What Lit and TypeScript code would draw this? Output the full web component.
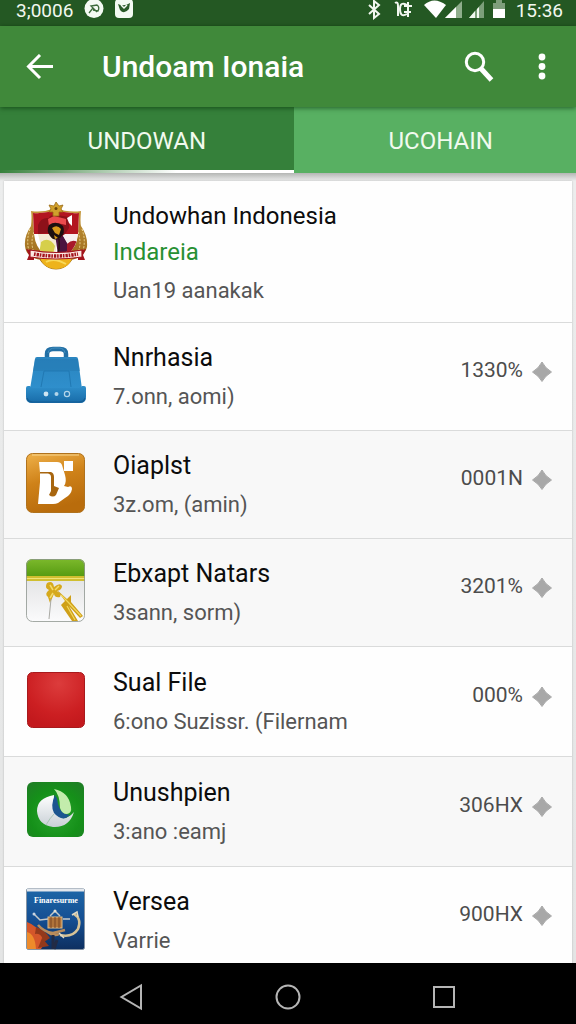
import { LitElement, html, svg, css, TemplateResult } from "lit";
import { customElement, property, state } from "lit/decorators.js";

type Item = {
  icon: string;
  title: string;
  accent?: string;
  sub: string;
  value?: string;
  shaded?: boolean;
  roomy?: boolean;
};

const ITEMS: Item[] = [
  { icon: "emblem", title: "Undowhan Indonesia", accent: "Indareia", sub: "Uan19 aanakak" },
  { icon: "bag", title: "Nnrhasia", sub: "7.onn, aomi)", value: "1330%" },
  { icon: "letter", title: "Oiaplst", sub: "3z.om, (amin)", value: "0001N", shaded: true },
  { icon: "ribbon", title: "Ebxapt Natars", sub: "3sann, sorm)", value: "3201%", shaded: true },
  { icon: "red", title: "Sual File", sub: "6:ono Suzissr. (Filernam", value: "000%", roomy: true },
  { icon: "swirl", title: "Unushpien", sub: "3:ano :eamj", value: "306HX", shaded: true, roomy: true },
  { icon: "poster", title: "Versea", sub: "Varrie", value: "900HX" },
];

const ICONS: Record<string, TemplateResult> = {
  emblem: html`<svg width="64" height="68" viewBox="0 0 64 68" aria-hidden="true">
    <defs>
      <linearGradient id="gold" x1="0" y1="0" x2="0" y2="1">
        <stop offset="0" stop-color="#c79a3c" /><stop offset="1" stop-color="#9c6a1c" />
      </linearGradient>
      <clipPath id="shield"><path d="M9 11Q20 12 32 8Q44 12 55 11L54 32Q52 52 32 60Q12 52 10 32Z" /></clipPath>
    </defs>
    <circle cx="32" cy="49" r="18" fill="#e0a51c" stroke="#a8741a" />
    <path d="M7 9Q19 11 31 6Q45 11 57 9Q56 20 57 24Q64 34 63 45Q60 56 46 58L18 58Q2 56 1 44Q0 34 7 24Q8 16 7 9Z" fill="url(#gold)" />
    <g fill="none" stroke="#efd692" stroke-width="1">
      <path d="M6 27Q2 38 5 49M10 30Q6 40 10 51M58 27Q62 38 59 49M54 30Q58 40 54 51" stroke-dasharray="2 1.5" />
    </g>
    <g clip-path="url(#shield)">
      <path d="M8 6H56V62H8Z" fill="#fff" />
      <path d="M8 6H56V32H32V10L32 32H8Z" fill="#b31520" />
      <path d="M14 32H32V56H20Z" fill="#f4ead3" />
      <path d="M31 32H38L47 48L34 53Z" fill="#4c1440" />
      <path d="M38 32H55V45L46 45Z" fill="#f7f1f0" />
      <path d="M43 42Q49 36 55 41V50H43Z" fill="#a81a2a" />
      <path d="M17 40Q25 34 31 44L29 52H15Z" fill="#d6cf4b" />
    </g>
    <path d="M14 23Q17 15 25 16Q27 12 33 13L45 15V26L41 32L34 37L24 31L14 32Z" fill="#8d1119" />
    <path d="M24 17L30 14L42 17V23L33 21L25 24Z" fill="#ec4b4d" />
    <path d="M43 16L48 13V24L45 21Z" fill="#fff" />
    <path d="M25 23Q32 18 39 24Q42 31 36 36Q30 40 26 34Q22 29 25 23Z" fill="#1c1010" />
    <path d="M28 26Q33 22 37 27L35 33L31 31ZM30 33L34 36L31 37Z" fill="#d8991a" />
    <path d="M35 37Q36 48 33 53" stroke="#2a1410" stroke-width="1.5" fill="none" />
    <path d="M32 0L35 4L39 3L37 7L39 10L35 10V14H29V10L25 10L27 7L25 3L30 4Z" fill="#d0a02c" stroke="#9a6b14" stroke-width=".8" />
    <circle cx="32" cy="6.500" r="1.500" fill="#6c470b" />
    <path d="M16 54Q32 50 48 54Q47 66 32 67Q18 66 16 54Z" fill="#eeb31c" />
    <path d="M22 60Q30 55 42 62" fill="none" stroke="#f8d95a" stroke-width="2" />
    <path d="M2 47L10 49V58L3 58L5 53ZM62 47L54 49V58L61 58L59 53Z" fill="#a3141d" />
    <path d="M6 48Q32 53 58 48V55Q32 59 6 55Z" fill="#fbe9e3" stroke="#a3141d" stroke-width="1.200" />
    <path d="M10 52Q32 56 54 52" fill="none" stroke="#a3141d" stroke-width="3.500" stroke-dasharray="1.600 1 2.400 .8" />
  </svg>`,
  bag: html`<svg width="60" height="60" viewBox="0 0 60 60" aria-hidden="true">
    <defs>
      <linearGradient id="bagBody" x1="0" y1="0" x2="0" y2="1">
        <stop offset="0" stop-color="#2a85c0" /><stop offset="1" stop-color="#2f8fcc" />
      </linearGradient>
      <linearGradient id="bagBase" x1="0" y1="0" x2="0" y2="1">
        <stop offset="0" stop-color="#2f8fcb" /><stop offset="1" stop-color="#176ba8" />
      </linearGradient>
    </defs>
    <path d="M21 14V9Q21 4 27 4H34Q40 4 40 9V14" fill="none" stroke="#226fa5" stroke-width="4.500" />
    <path d="M22 8Q23 3 29 3H33Q38 3 39 8" fill="none" stroke="#438fbe" stroke-width="1" />
    <path d="M9 14Q9 12 11 12H50Q52 12 52 14L56 44H4Z" fill="url(#bagBody)" />
    <path d="M9 14L7 26H54L52 14Z" fill="#2479b3" opacity=".6" />
    <path d="M18 26L15 42M43 26L45 42M18 26H43" stroke="#2179b3" stroke-width="1" fill="none" />
    <path d="M0 43Q0 41 2 41H4Q5 43 8 43H52Q55 43 56 41H58Q60 41 60 43V52Q60 58 54 58H6Q0 58 0 52Z" fill="url(#bagBase)" />
    <path d="M1 53Q2 57 7 57H53Q58 57 59 53" fill="none" stroke="#145d95" stroke-width="1.200" />
    <circle cx="20" cy="49" r="2.400" fill="#cfe5f2" />
    <circle cx="30.500" cy="49" r="2" fill="#b3d5ea" />
    <circle cx="41" cy="49" r="2.600" fill="#2578b4" stroke="#b3d5ea" stroke-width="1.200" />
  </svg>`,
  letter: html`<svg width="60" height="60" viewBox="0 0 60 60" aria-hidden="true">
    <defs>
      <linearGradient id="amber" x1="0" y1="0" x2=".3" y2="1">
        <stop offset="0" stop-color="#efb14a" /><stop offset=".5" stop-color="#cf8219" /><stop offset="1" stop-color="#b96c0c" />
      </linearGradient>
    </defs>
    <rect x=".5" y=".5" width="58" height="59" rx="6" fill="url(#amber)" stroke="#b0721d" />
    <path d="M6 2H53" stroke="#f7d58f" stroke-width="1" />
    <path d="M13 9H31Q35 9 36 12L39 22Q41 29 38 33L42 34Q46 32 46 36Q45 42 39 45L32 50Q30 51 27 51H12L14 29V20Z" fill="#fff" />
    <path d="M14 19H25Q28 20 28 24V33L33 35L30 42Q27 45 23 42L25 38V24Q25 21 22 20.500H14Z" fill="#a8660f" />
    <rect x="38" y="8" width="9" height="10" fill="#fff" />
  </svg>`,
  ribbon: html`<svg width="60" height="63" viewBox="0 0 60 63" aria-hidden="true">
    <defs>
      <linearGradient id="lime" x1="0" y1="0" x2="0" y2="1">
        <stop offset="0" stop-color="#7cb92c" /><stop offset="1" stop-color="#559a10" />
      </linearGradient>
      <linearGradient id="paper" x1="0" y1="0" x2="0" y2="1">
        <stop offset="0" stop-color="#d9dadb" /><stop offset="1" stop-color="#fbfbfc" />
      </linearGradient>
      <clipPath id="sheet"><rect x="0" y="0" width="59" height="62" rx="6" /></clipPath>
    </defs>
    <g clip-path="url(#sheet)">
      <rect width="60" height="63" fill="url(#paper)" />
      <rect width="60" height="18" fill="url(#lime)" />
      <rect y="17" width="60" height="5" fill="#d0bf30" />
      <path d="M0 19.500H60" stroke="#f0e376" />
      <path d="M21 24Q27 21 28 28Q34 23 36 27Q36 31 31 32Q36 35 34 38Q29 39 28 35L24 44L22 38Q18 35 23 31Q18 29 21 24Z" fill="#d6a91c" />
      <path d="M24 26L27 31M33 27L29 31M24 39L27 34" stroke="#f4dc6a" stroke-width="1.500" />
      <path d="M31 31L41 40L45 36L45 43L57 57L54 59L43 47L52 62H46L35 46L39 42Z" fill="#cfa019" />
      <path d="M35 36L42 43L55 57M41 47L49 61" stroke="#f2d85e" stroke-width="1.200" fill="none" />
      <path d="M25 40L23 60" stroke="#a9a9a4" stroke-width="1" />
    </g>
    <rect x=".5" y=".5" width="58" height="62" rx="6" fill="none" stroke="#8f9690" opacity=".8" />
  </svg>`,
  red: html`<svg width="60" height="58" viewBox="0 0 60 58" aria-hidden="true">
    <defs>
      <radialGradient id="cherry" cx=".55" cy=".2" r=".8">
        <stop offset="0" stop-color="#dc3c3c" /><stop offset=".7" stop-color="#cc1f22" /><stop offset="1" stop-color="#c3191d" />
      </radialGradient>
    </defs>
    <rect x="1.500" y="1.500" width="57" height="55" rx="5" fill="url(#cherry)" stroke="#a81a1d" />
  </svg>`,
  swirl: html`<svg width="60" height="56" viewBox="0 0 60 56" aria-hidden="true">
    <defs>
      <radialGradient id="leaf" cx=".5" cy=".6" r=".75">
        <stop offset="0" stop-color="#2aa52e" /><stop offset=".6" stop-color="#159019" /><stop offset="1" stop-color="#1f7d26" />
      </radialGradient>
      <linearGradient id="pearl" x1="0" y1="0" x2="0" y2="1">
        <stop offset="0" stop-color="#fff" /><stop offset="1" stop-color="#c9d0d6" />
      </linearGradient>
    </defs>
    <rect x="1" y="0" width="57" height="55" rx="6" fill="url(#leaf)" />
    <path d="M28 13Q11 16 11 29Q12 43 27 45Q43 46 48 30Q42 37 36 36Q31 34 29 26Q27 20 28 13Z" fill="url(#pearl)" />
    <path d="M29 13Q32 17 32 22Q35 33 44 33L40 36Q34 38 28 31Q24 24 29 13Z" fill="#1c5590" />
    <path d="M28 7Q43 10 45 25Q46 31 41 32Q36 32 34 26Q34 13 28 7Z" fill="#c3ecac" />
    <path d="M28 32Q24 36 20 43" fill="none" stroke="#a9c6b5" stroke-width="1" />
  </svg>`,
  poster: html`<svg width="60" height="62" viewBox="0 0 60 62" aria-hidden="true">
    <defs>
      <linearGradient id="sea" x1="0" y1="0" x2="0" y2="1">
        <stop offset="0" stop-color="#1d67a8" /><stop offset=".5" stop-color="#154f93" /><stop offset="1" stop-color="#0d2f60" />
      </linearGradient>
    </defs>
    <rect x=".5" y=".5" width="58" height="61" rx="2" fill="url(#sea)" stroke="#8593a3" />
    <path d="M1 2H58" stroke="#e3e7ec" stroke-width="3" />
    <text x="8" y="15" font-family="'Liberation Serif', serif" font-size="8" font-weight="700" fill="#fff">Finaresurme</text>
    <path d="M1 34Q12 38 16 48Q20 55 15 61H1Z" fill="#d4562a" />
    <path d="M1 44Q9 46 10 61H1Z" fill="#ee8b2b" />
    <path d="M10 39Q19 42 24 50L18 54Q15 44 9 46ZM16 50L23 58L12 60Z" fill="#93391b" />
    <rect x="22" y="29" width="14" height="11" fill="#b0733a" stroke="#e3c08a" />
    <path d="M25 29V40M29 29V40M33 29V40" stroke="#7a4722" />
    <path d="M24 28L29 23L34 28M8 26L14 32L22 31M37 31H44" fill="none" stroke="#c3c8c9" stroke-width="1.500" />
    <circle cx="29" cy="23" r="1.500" fill="#e6e2d4" /><circle cx="8" cy="26" r="1.500" fill="#c9d4e2" />
    <path d="M12 37Q18 44 27 45L39 42M20 43Q28 49 33 46" fill="none" stroke="#b98c5c" stroke-width="2.500" />
    <path d="M48 26Q56 31 52 41Q46 50 34 47" fill="none" stroke="#d6c296" stroke-width="2.500" />
    <path d="M46 27L51 24L52 29M33 45L38 50" fill="none" stroke="#e3dac3" stroke-width="1.500" />
    <path d="M27 47V61M31 52L28 61" stroke="#222b45" stroke-width="3" />
  </svg>`,
};

@customElement("file-row")
class FileRow extends LitElement {
  @property({ attribute: false }) item!: Item;

  static styles = css`
    :host {
      display: block;
    }
    .row {
      display: flex;
      align-items: center;
      gap: 25px;
      box-sizing: border-box;
      min-height: 108px;
      padding: 12px 20px;
      border-bottom: 1px solid #dadbdb;
      background: #fefefe;
    }
    .shaded {
      background: #f8f8f8;
    }
    .roomy {
      min-height: 110px;
    }
    .lead {
      align-items: flex-start;
      min-height: 142px;
      padding-top: 19px;
    }
    .icon {
      flex: 0 0 64px;
      display: flex;
      justify-content: center;
      padding-bottom: 4px;
    }
    .lead .icon {
      padding-top: 2px;
    }
    .icon svg {
      display: block;
    }
    .body {
      flex: 1;
      min-width: 0;
      padding-top: 2px;
    }
    .title,
    .accent,
    .sub {
      margin: 0;
      line-height: 28px;
      white-space: nowrap;
      font-weight: 400;
    }
    .title {
      font-size: 25px;
      color: #0c0c0c;
    }
    .lead .title {
      font-size: 24px;
    }
    .accent {
      margin-top: 8px;
      font-size: 24px;
      color: #279032;
    }
    .sub {
      margin-top: 11px;
      font-size: 22px;
      color: #555;
    }
    .side {
      display: flex;
      align-items: center;
      gap: 9px;
      padding-bottom: 14px;
      font-size: 21px;
      line-height: 28px;
      color: #4c4c4c;
      white-space: nowrap;
    }
    .side svg {
      display: block;
      padding-top: 5px;
    }
  `;

  render() {
    const { icon, title, accent, sub, value, shaded, roomy } = this.item;
    return html`
      <article class="row ${shaded ? "shaded" : ""} ${roomy ? "roomy" : ""} ${accent ? "lead" : ""}">
        <div class="icon">${ICONS[icon]}</div>
        <div class="body">
          <h2 class="title">${title}</h2>
          ${accent ? html`<p class="accent">${accent}</p>` : ""}
          <p class="sub">${sub}</p>
        </div>
        ${value
          ? html`<div class="side">
              <span>${value}</span>
              <svg width="20" height="20" viewBox="0 0 20 20" aria-hidden="true">
                <path d="M10 0Q13 6 19.500 10Q13 14 10 19.500Q7 14 .5 10Q7 6 10 0Z" fill="#a8a8a8" stroke="#a8a8a8" />
              </svg>
            </div>`
          : ""}
      </article>
    `;
  }
}

@customElement("app-root")
class AppRoot extends LitElement {
  @state() private tab = 0;

  static styles = css`
    :host {
      display: flex;
      flex-direction: column;
      height: 100vh;
      overflow: hidden;
      background: #e9eaea;
      font-family: Roboto, "Liberation Sans", sans-serif;
    }
    button {
      margin: 0;
      padding: 0;
      border: 0;
      background: none;
      color: inherit;
      font: inherit;
      cursor: pointer;
    }
    svg {
      display: block;
    }
    .status {
      display: flex;
      justify-content: space-between;
      align-items: flex-start;
      height: 26px;
      flex: none;
      padding: 0 13px 0 16px;
      background: #245823;
      color: #f2f8f0;
      font-size: 19px;
      line-height: 22px;
    }
    .group {
      display: flex;
      align-items: flex-start;
      gap: 11px;
    }
    .bar {
      display: flex;
      align-items: center;
      height: 81px;
      flex: none;
      padding: 0 10px 0 16px;
      background: #40893a;
      color: #fff;
      box-shadow: 0 1px 5px rgba(0, 40, 0, 0.6);
      z-index: 1;
    }
    .tool {
      display: grid;
      place-items: center;
      width: 48px;
      height: 48px;
    }
    .heading {
      flex: 1;
      margin: 0 0 0 38px;
      font-size: 30px;
      line-height: 40px;
      font-weight: 500;
      white-space: nowrap;
    }
    .more {
      margin-left: 15px;
    }
    .tabs {
      display: flex;
      overflow: hidden;
      height: 66px;
      flex: none;
      color: #f1faee;
      background: #58b062;
    }
    .tab {
      flex: 0 0 51%;
      padding-top: 4px;
      border-bottom: 3px solid transparent;
      font-size: 24px;
      line-height: 58px;
    }
    .active {
      background: #35803a;
      border-image: linear-gradient(90deg, #35803a, #fff 60%) 1;
    }
    .content {
      flex: 1;
      min-height: 0;
      overflow-y: auto;
      scrollbar-width: none;
      padding: 8px 4px 0;
      background: linear-gradient(#b4b6b4, #eceded 8px, #e4e5e5);
    }
    .list {
      list-style: none;
      margin: 0;
      padding: 0;
      box-shadow: 0 0 2px rgba(0, 0, 0, 0.2);
    }
    .nav {
      display: grid;
      grid-template-columns: repeat(3, 27%);
      justify-content: center;
      justify-items: center;
      align-items: center;
      height: 55px;
      padding-top: 6px;
      background: #000;
      flex: none;
    }
  `;

  private tabButton(label: string, index: number) {
    return html`<button
      class="tab ${this.tab === index ? "active" : ""}"
      role="tab"
      aria-selected=${this.tab === index ? "true" : "false"}
      @click=${() => (this.tab = index)}
    >${label}</button>`;
  }

  private statusIcons() {
    return svg`
      <g fill="none" stroke="#f2f8f0" stroke-width="2">
        <path d="M2 5L12 14L7 18V1L12 5L2 14" />
        <path d="M28 3Q31 1 31 6V16M40 5Q33 1 33 9Q33 18 40 14M41 2V17M37 6H45M37 12H44" />
      </g>
      <path d="M57 5Q67 -4 79 5L69 18Z" fill="#fff" />
      <path d="M78 18L95 1V18Z" fill="#8fae8c" /><path d="M78 18L89 7V18Z" fill="#fff" />
      <path d="M102 18L117 1V18Z" fill="#7c9f7a" /><path d="M102 18L108 11V18ZM110 9L112 7V18H110Z" fill="#f2f8f0" />
      <path d="M126 3H129V0H135V3H138V9H126Z" fill="#7e9f7c" /><path d="M126 9H138V18H126Z" fill="#fff" />
    `;
  }

  render() {
    return html`
      <div class="status">
        <div class="group">
          <span>3;0006</span>
          <svg width="20" height="20" viewBox="0 0 20 20" aria-hidden="true">
            <circle cx="10" cy="8.500" r="9.500" fill="#f4faf3" />
            <path d="M5 13L9 8L7 6L13 5Q16 7 14 11L9 10M9 8L13 12" fill="none" stroke="#3c6a3a" stroke-width="1.300" />
          </svg>
          <svg width="18" height="20" viewBox="0 0 18 20" aria-hidden="true">
            <rect x="0" y="-1" width="18" height="19" rx="4" fill="#f4faf3" />
            <path d="M3 4Q9 7 15 3L14 9Q9 15 5 10Z" fill="#2a5a29" />
            <path d="M6 5L9 8L12 5" fill="none" stroke="#f4faf3" stroke-width="1.500" />
          </svg>
        </div>
        <div class="group">
          <svg width="138" height="20" viewBox="0 0 138 20" aria-hidden="true">${this.statusIcons()}</svg>
          <span>15:36</span>
        </div>
      </div>
      <header class="bar">
        <button class="tool" aria-label="Back">
          <svg width="28" height="26" viewBox="0 0 28 26">
            <path d="M27 12.500H3M14 1L2.500 12.500L14 24" fill="none" stroke="#fff" stroke-width="3" />
          </svg>
        </button>
        <h1 class="heading">Undoam Ionaia</h1>
        <button class="tool" aria-label="Search">
          <svg width="30" height="32" viewBox="0 0 30 32">
            <circle cx="11" cy="11" r="8.700" fill="none" stroke="#fff" stroke-width="3" />
            <path d="M16.500 17L27.500 29" stroke="#fff" stroke-width="5" />
          </svg>
        </button>
        <button class="tool more" aria-label="More options">
          <svg width="8" height="28" viewBox="0 0 8 28" fill="#fff">
            <circle cx="4" cy="4" r="3.400" /><circle cx="4" cy="13.500" r="3.400" /><circle cx="4" cy="23" r="3.400" />
          </svg>
        </button>
      </header>
      <div class="tabs" role="tablist">${this.tabButton("UNDOWAN", 0)}${this.tabButton("UCOHAIN", 1)}</div>
      <main class="content">
        <ul class="list">
          ${ITEMS.map((item) => html`<li><file-row .item=${item}></file-row></li>`)}
        </ul>
      </main>
      <nav class="nav">
        <button aria-label="Back">
          <svg width="26" height="28" viewBox="0 0 26 28"><path d="M22 2.500V25.500L2.500 14Z" fill="none" stroke="#b5b5b5" stroke-width="2" /></svg>
        </button>
        <button aria-label="Home">
          <svg width="28" height="28" viewBox="0 0 28 28"><circle cx="14" cy="14" r="11.500" fill="none" stroke="#b5b5b5" stroke-width="2" /></svg>
        </button>
        <button aria-label="Recent apps">
          <svg width="24" height="24" viewBox="0 0 24 24"><rect x="2" y="2" width="20" height="20" fill="none" stroke="#b5b5b5" stroke-width="2" /></svg>
        </button>
      </nav>
    `;
  }
}
